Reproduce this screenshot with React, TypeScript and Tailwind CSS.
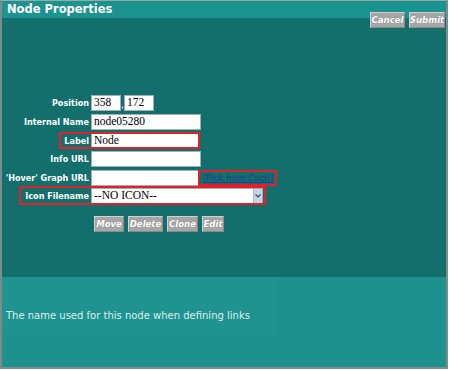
import React from "react";

const labelFont = { fontFamily: '"DejaVu Sans Condensed", "DejaVu Sans", Verdana, sans-serif' };

function Btn({ children, w }: { children: React.ReactNode; w: string }) {
  return (
    <div
      className={`${w} h-[16px] flex items-center justify-center bg-[#a6a6a6] border border-t-[#d0d0d0] border-l-[#d0d0d0] border-r-[#8a8a8a] border-b-[#8a8a8a] text-white text-[9.5px] font-bold italic leading-none`}
      style={{ ...labelFont, textShadow: "0 0 1px #7a7a7a" }}
    >
      {children}
    </div>
  );
}

function Label({ children }: { children: React.ReactNode }) {
  return (
    <div className="w-[87px] shrink-0 text-right text-white text-[9px] font-bold leading-none whitespace-nowrap" style={labelFont}>
      {children}
    </div>
  );
}

function Input({ value, w }: { value?: string; w: string }) {
  return (
    <div
      className={`${w} h-[16px] bg-white border border-[#9fb0b0] flex items-center pl-[2px] text-[11.5px] text-black leading-none`}
      style={{ fontFamily: '"Liberation Serif", "Times New Roman", serif' }}
    >
      {value}
    </div>
  );
}

export default function App() {
  return (
    <div className="w-[448px] h-[369px] border-2 border-t border-[#7b8c8c] border-t-[#9aa8a8] flex flex-col bg-white overflow-hidden">
      <div className="h-[17px] shrink-0 bg-[#1b9490] flex items-center pl-[5px]">
        <span
          className="text-white font-bold text-[11.5px] leading-none"
          style={{ fontFamily: '"DejaVu Sans", Verdana, sans-serif' }}
        >
          Node Properties
        </span>
      </div>
      <div className="h-[259px] shrink-0 bg-[#126f6c] relative">
        <div className="absolute right-[1px] top-[-6px] flex gap-[4px]">
          <Btn w="w-[35px]">Cancel</Btn>
          <Btn w="w-[36px]">Submit</Btn>
        </div>
        <div className="flex flex-col pt-[77px]">
          <div className="flex items-center h-[16px]">
            <Label>Position</Label>
            <div className="ml-[2px] flex items-end">
              <Input value="358" w="w-[30px]" />
              <span className="text-white text-[10px] leading-none w-[3px] mb-[1px]" style={labelFont}>,</span>
              <Input value="172" w="w-[30px]" />
            </div>
          </div>
          <div className="flex items-center h-[16px] mt-[3px]">
            <Label>Internal Name</Label>
            <div className="ml-[2px]">
              <Input value="node05280" w="w-[110px]" />
            </div>
          </div>
          <div className="flex items-center h-[16px] mt-[3px] relative">
            <Label>Label</Label>
            <div className="ml-[2px]">
              <Input value="Node" w="w-[108px]" />
            </div>
            <div className="absolute left-[57px] top-[-1px] w-[141px] h-[17px] border-2 border-[#e3202a]" />
          </div>
          <div className="flex items-center h-[16px] mt-[2px]">
            <Label>Info URL</Label>
            <div className="ml-[2px]">
              <Input w="w-[110px]" />
            </div>
          </div>
          <div className="flex items-center h-[16px] mt-[3px]">
            <Label>'Hover' Graph URL</Label>
            <div className="ml-[2px]">
              <Input w="w-[109px]" />
            </div>
            <div className="ml-[-2px] h-[16px] w-[79px] border-2 border-[#e3202a] flex items-center pl-[3px]">
              <span
                className="text-[#2b3d8f] underline text-[8.5px] leading-none whitespace-nowrap"
                style={{ fontFamily: '"DejaVu Sans", Verdana, sans-serif' }}
              >
                [Pick from Cacti]
              </span>
            </div>
          </div>
          <div className="flex items-center h-[16px] mt-[2px] relative">
            <Label>Icon Filename</Label>
            <div className="ml-[2px]">
              <div
                className="w-[172px] h-[16px] bg-white border border-[#9fb0b0] flex items-center pl-[2px] text-[11.5px] text-black leading-none"
                style={{ fontFamily: '"Liberation Serif", "Times New Roman", serif' }}
              >
                <span className="flex-1">--NO ICON--</span>
                <div className="w-[9px] h-[14px] bg-[#c7d4ea] border-l border-[#a9b8d4] flex items-center justify-center">
                  <svg width="6" height="4" viewBox="0 0 6 4">
                    <path d="M0.5 0.5 L3 3 L5.5 0.5" fill="none" stroke="#3a4a6a" strokeWidth="1.2" />
                  </svg>
                </div>
              </div>
            </div>
            <div className="absolute left-[17px] top-[-2px] w-[247px] h-[19px] border-2 border-[#e3202a]" />
          </div>
          <div className="flex gap-[4px] pl-[92px] mt-[12px]">
            <Btn w="w-[30px]">Move</Btn>
            <Btn w="w-[35px]">Delete</Btn>
            <Btn w="w-[31px]">Clone</Btn>
            <Btn w="w-[22px]">Edit</Btn>
          </div>
        </div>
      </div>
      <div className="flex-1 bg-[#1c918d] flex flex-col">
        <div className="h-[58px] w-[273px] bg-[#1e9390] flex items-center pl-[4px] pt-[20px]">
          <span
            className="text-[#dff0ef] text-[10px] leading-none whitespace-nowrap"
            style={{ fontFamily: '"DejaVu Sans", Verdana, sans-serif' }}
          >
            The name used for this node when defining links
          </span>
        </div>
      </div>
    </div>
  );
}
